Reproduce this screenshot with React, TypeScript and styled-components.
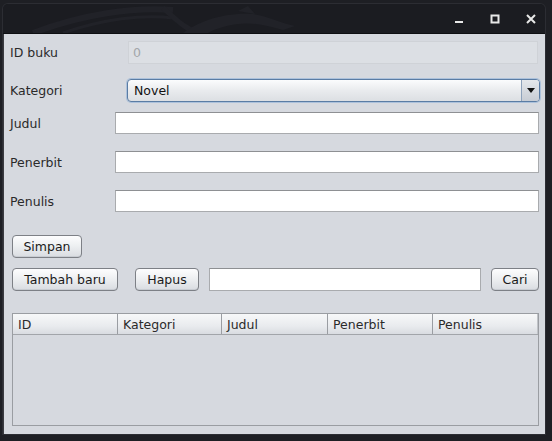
import React from "react";
import styled, { createGlobalStyle } from "styled-components";

const Global = createGlobalStyle`
  html, body { margin: 0; padding: 0; background: #1e1f24; }
  body { width: 552px; height: 441px; overflow: hidden; font-family: "DejaVu Sans", "Liberation Sans", sans-serif; }
  #root { width: 552px; height: 441px; }
`;

const Desktop = styled.div`
  width: 552px;
  height: 441px;
  background: #1e1f24;
  padding: 4px 0 0 3px;
  box-sizing: border-box;
`;

const Window = styled.div`
  width: 542px;
  display: flex;
  flex-direction: column;
  border-radius: 5px 5px 0 0;
  overflow: hidden;
  box-shadow: 0 0 0 1px #2c2d33;
`;

const TitleBar = styled.div`
  position: relative;
  height: 29px;
  background: #1b1c21;
  display: flex;
  align-items: center;
  justify-content: flex-end;
  gap: 8px;
  padding-right: 0;
  border-bottom: 1px solid #0e0f12;
`;

const Dragon = styled.svg`
  position: absolute;
  left: 20px;
  top: 0;
`;

const TitleButton = styled.div`
  width: 28px;
  height: 28px;
  display: flex;
  align-items: center;
  justify-content: center;
`;

const Content = styled.div`
  background: #d6d9df;
  height: 400px;
  padding: 7px 6px 0 6px;
  box-sizing: border-box;
  display: flex;
  flex-direction: column;
  font-size: 12.5px;
  color: #2a2a2a;
  border-left: 1px solid #3a3b40;
`;

const FormRow = styled.div<{ $top: number; $label: number; $h: number }>`
  display: flex;
  align-items: center;
  margin-top: ${(p) => p.$top}px;
  height: ${(p) => p.$h}px;
  & > label {
    width: ${(p) => p.$label}px;
    flex: none;
  }
`;

const Label = styled.label`
  color: #2a2a2a;
  white-space: nowrap;
`;

const TextField = styled.div<{ $disabled?: boolean }>`
  flex: 1;
  align-self: stretch;
  box-sizing: border-box;
  background: ${(p) => (p.$disabled ? "#dcdfe4" : "#ffffff")};
  border: 1px solid ${(p) => (p.$disabled ? "#cfd2d7" : "#a9abae")};
  border-top-color: ${(p) => (p.$disabled ? "#cfd2d7" : "#8e9093")};
  color: #a3a6aa;
  padding: 0 4px;
  display: flex;
  align-items: center;
  margin-right: ${(p) => (p.$disabled ? 1 : 0)}px;
`;

const Combo = styled.div`
  flex: 1;
  align-self: stretch;
  box-sizing: border-box;
  margin-right: -1px;
  border: 1px solid #5a7ca4;
  border-radius: 4px;
  box-shadow: 0 0 0 1px rgba(130, 170, 215, 0.5);
  background: linear-gradient(#fbfcfd, #e9ebee 50%, #dcdfe3);
  display: flex;
  align-items: stretch;
  overflow: hidden;
`;

const ComboText = styled.div`
  flex: 1;
  display: flex;
  align-items: center;
  padding-left: 6px;
  color: #111;
`;

const ComboArrow = styled.div`
  width: 17px;
  border-left: 1px solid #8ea2bb;
  background: linear-gradient(#e4e7eb, #c7ccd4);
  display: flex;
  align-items: center;
  justify-content: center;
`;

const ButtonRow = styled.div<{ $top: number }>`
  display: flex;
  align-items: stretch;
  height: 23px;
  margin-top: ${(p) => p.$top}px;
  padding-left: 2px;
  gap: 10px;
`;

const Button = styled.button<{ $w: number; $ml?: number }>`
  width: ${(p) => p.$w}px;
  margin-left: ${(p) => p.$ml ?? 0}px;
  flex: none;
  box-sizing: border-box;
  border: 1px solid #7d8086;
  border-radius: 4px;
  background: linear-gradient(#fdfdfe, #eef0f2 45%, #d9dce1);
  font-family: "DejaVu Sans", "Liberation Sans", sans-serif;
  font-size: 12.5px;
  color: #1a1a1a;
  padding: 0;
  display: flex;
  align-items: center;
  justify-content: center;
  box-shadow: inset 0 -1px 0 #c8ccd2;
`;

const SearchField = styled.div`
  flex: none;
  width: 272px;
  box-sizing: border-box;
  background: #fff;
  border: 1px solid #a9abae;
  border-top-color: #8e9093;
`;

const Table = styled.div`
  margin-top: 22px;
  margin-left: 2px;
  width: 527px;
  height: 113px;
  box-sizing: border-box;
  border: 1px solid #9a9da2;
  display: flex;
  flex-direction: column;
`;

const Header = styled.div`
  display: grid;
  grid-template-columns: 105px 104px 106px 105px 1fr;
  height: 20px;
  border-bottom: 1px solid #a2a5aa;
  background: linear-gradient(#f7f8f9, #e9ebee 60%, #d9dce1);
`;

const HeaderCell = styled.div<{ $last?: boolean }>`
  display: flex;
  align-items: center;
  padding-left: 5px;
  border-right: 1px solid ${(p) => (p.$last ? "#c0c3c8" : "#9a9da2")};
  color: #2a2a2a;
  font-size: 12.5px;
`;

const Body = styled.div`
  flex: 1;
  background: #d6d9df;
`;

export default function App() {
  const cols = ["ID", "Kategori", "Judul", "Penerbit", "Penulis"];
  return (
    <>
      <Global />
      <Desktop>
        <Window>
          <TitleBar>
            <Dragon width="300" height="29" viewBox="0 0 300 29">
              <path d="M10 29 C 60 10, 110 3, 150 6" stroke="#212228" strokeWidth="6" fill="none" />
              <path d="M40 29 C 80 15, 120 10, 150 14" stroke="#212228" strokeWidth="3" fill="none" />
              <path d="M140 4 C 150 12, 160 24, 175 29" stroke="#212228" strokeWidth="5" fill="none" />
              <path d="M160 29 C 175 18, 200 8, 230 10 C 245 12, 255 18, 272 22 L 260 26 C 245 22, 230 18, 215 20 C 200 22, 190 26, 185 29 Z" fill="#212228" />
              <path d="M215 7 L 225 2 L 232 10 Z" fill="#212228" />
            </Dragon>
            <TitleButton>
              <svg width="10" height="10" viewBox="0 0 10 10">
                <rect x="1" y="7" width="8" height="2" fill="#e8e8e8" />
              </svg>
            </TitleButton>
            <TitleButton>
              <svg width="10" height="10" viewBox="0 0 10 10">
                <rect x="1.5" y="1.5" width="7" height="7" fill="none" stroke="#e8e8e8" strokeWidth="2" />
              </svg>
            </TitleButton>
            <TitleButton>
              <svg width="10" height="10" viewBox="0 0 10 10">
                <path d="M1 1 L9 9 M9 1 L1 9" stroke="#e8e8e8" strokeWidth="2" />
              </svg>
            </TitleButton>
          </TitleBar>
          <Content>
            <FormRow $top={0} $label={118} $h={23}>
              <Label>ID buku</Label>
              <TextField $disabled>0</TextField>
            </FormRow>
            <FormRow $top={15} $label={117} $h={23}>
              <Label>Kategori</Label>
              <Combo>
                <ComboText>Novel</ComboText>
                <ComboArrow>
                  <svg width="8" height="6" viewBox="0 0 8 6">
                    <path d="M0 0 L8 0 L4 5 Z" fill="#111" />
                  </svg>
                </ComboArrow>
              </Combo>
            </FormRow>
            <FormRow $top={10} $label={105} $h={22}>
              <Label>Judul</Label>
              <TextField />
            </FormRow>
            <FormRow $top={17} $label={105} $h={22}>
              <Label>Penerbit</Label>
              <TextField />
            </FormRow>
            <FormRow $top={17} $label={105} $h={22}>
              <Label>Penulis</Label>
              <TextField />
            </FormRow>
            <ButtonRow $top={23}>
              <Button $w={70}>Simpan</Button>
            </ButtonRow>
            <ButtonRow $top={10}>
              <Button $w={106}>Tambah baru</Button>
              <Button $w={64} $ml={7}>Hapus</Button>
              <SearchField />
              <Button $w={48}>Cari</Button>
            </ButtonRow>
            <Table>
              <Header>
                {cols.map((c, i) => (
                  <HeaderCell key={c} $last={i === cols.length - 1}>
                    {c}
                  </HeaderCell>
                ))}
              </Header>
              <Body />
            </Table>
          </Content>
        </Window>
      </Desktop>
    </>
  );
}
